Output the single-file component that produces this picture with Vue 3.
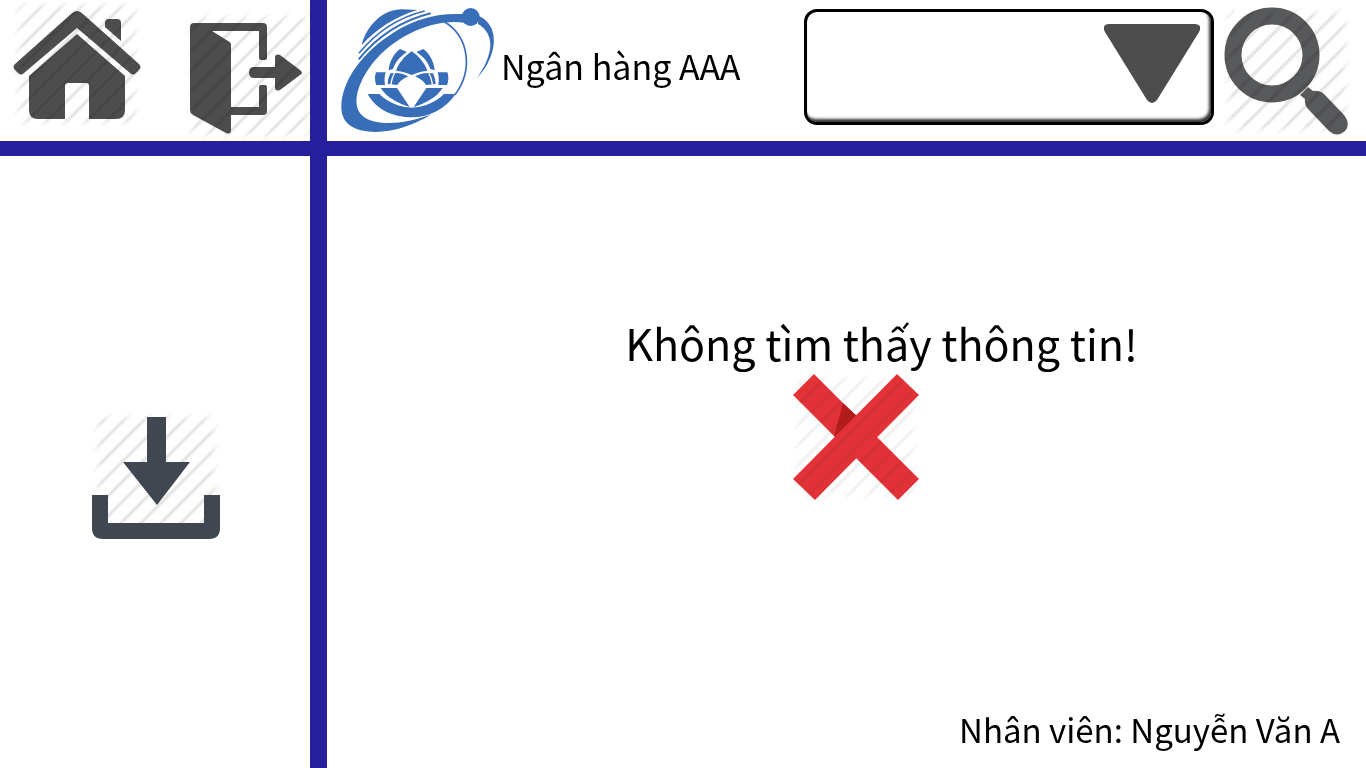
<script setup>
import { ref } from 'vue'

const bank = 'Ngân hàng AAA'
const employee = 'Nguyễn Văn A'
const query = ref('')
</script>

<template>
  <div class="screen">
    <nav class="tools" aria-label="Điều hướng">
      <button class="icon home" type="button" aria-label="Trang chủ">
        <svg viewBox="0 0 128 128" aria-hidden="true">
          <path d="M64 11Q61 11 58 14L2 64Q-1 67 2 70L5 73Q8 76 11 73L64 28L117 73Q120 76 123 73L126 70Q129 67 126 64L70 14Q67 11 64 11Z" />
          <path d="M92 27V23Q92 19 96 19H104Q108 19 108 23V41Z" />
          <path d="M64 34L16 76V110Q16 119 25 119H52V86Q52 83 55 83H73Q76 83 76 86V119H103Q112 119 112 110V76Z" />
        </svg>
      </button>
      <button class="icon exit" type="button" aria-label="Đăng xuất">
        <svg viewBox="0 0 128 128" aria-hidden="true">
          <path d="M4 15Q4 11 8 11H77Q81 11 81 15V46Q81 48 79 48H75Q73 48 73 46V19H26L42 29Q45 30 45 33V95H73V75Q73 73 75 73H79Q81 73 81 75V99Q81 103 77 103H45V118Q45 123 40 121L7 103Q4 101 4 98Z" />
          <path d="M68 55H89V46Q89 41 94 43L114 58Q118 61 114 63L94 78Q89 80 89 75V66H68Q63 66 63 60.500Q63 55 68 55Z" />
        </svg>
      </button>
    </nav>

    <header class="header">
      <div class="brand">
        <svg class="logo" viewBox="30 12 468 396" aria-hidden="true">
          <g fill="#386db8">
            <path d="M95 135C110 75 160 27 218 28L262 30C200 48 140 86 95 135Z" />
            <path d="M34 322C34 240 100 155 190 98C260 54 330 38 402 43V68C310 54 190 110 128 190C82 250 66 310 92 342C120 376 210 380 305 343C235 385 165 402 110 394C60 388 34 362 34 322Z" />
            <circle cx="422" cy="51" r="27" />
            <path d="M446 48C510 74 505 167 441 234C482 175 504 108 444 72Z" />
          </g>
          <g fill="none" stroke="#386db8" stroke-width="5">
            <path d="M87 160C140 95 205 52 284 33" />
            <path d="M86 178C140 112 210 63 302 40" stroke-width="6" />
            <path d="M343 65C418 110 430 210 375 284" />
          </g>
          <g transform="translate(105 132)" fill="#386db8">
            <path d="M8 150H43C70 178 110 190 140 191C170 190 210 178 237 150H272C240 197 190 220 140 220C90 220 35 200 8 150Z" />
            <path d="M140 22C162 37 179 57 187 80C167 82 152 88 140 93C128 88 113 82 93 80C101 57 118 37 140 22Z" />
            <g id="petals">
              <path d="M105 15L126 24C105 38 91 54 84 75L71 79C73 53 85 31 105 15Z" />
              <path d="M33 85H62C58 97 58 110 60 123H34Q26 103 33 85Z" />
              <path d="M76 88Q105 83 130 97C113 105 103 112 97 123L68 120Q68 105 76 88Z" />
              <path d="M47 132H96L134 189C98 178 65 160 47 132Z" />
              <path d="M90 84C83 96 79 108 77 124" fill="none" stroke="#fff" stroke-width="4" />
            </g>
            <use href="#petals" transform="translate(280 0) scale(-1 1)" />
          </g>
        </svg>
        <h1 class="bank">{{ bank }}</h1>
      </div>

      <form class="search" @submit.prevent>
        <div class="picker">
          <select v-model="query" aria-label="Tìm kiếm">
            <option value=""></option>
          </select>
          <svg viewBox="0 0 96 79" aria-hidden="true">
            <path d="M5 0H91Q99 1 95 8L53 76Q48 82 43 76L1 8Q-3 1 5 0Z" />
          </svg>
        </div>
        <button class="icon find" type="submit" aria-label="Tìm">
          <svg viewBox="0 0 128 128" aria-hidden="true">
            <circle cx="49" cy="48" r="39" fill="none" stroke="#58595b" stroke-width="17" />
            <path d="M77 88L85 80L90 84Q97 83 102 88L121 108Q128 117 122 124Q114 131 106 124L86 103Q81 98 82 92Z" />
          </svg>
        </button>
      </form>
    </header>

    <aside class="side">
      <button class="icon save" type="button" aria-label="Tải xuống">
        <svg viewBox="0 0 128 128" aria-hidden="true">
          <path d="M55 5H74V50H98L65 93L31 50H55Z" />
          <path d="M0 83H16V111H112V83H128V116Q128 127 117 127H11Q0 127 0 116Z" />
        </svg>
      </button>
    </aside>

    <main class="content">
      <div class="message" role="status">
        <p>Không tìm thấy thông tin!</p>
        <div class="icon cross">
          <svg viewBox="0 0 128 128" aria-hidden="true">
            <path d="M22 1L127 106L106 127L1 22Z" fill="#e23237" />
            <path d="M51 30L65 43L42 64Z" fill="#b71c1c" />
            <path d="M105 1L127 22L23 127L1 106Z" fill="#e23237" />
          </svg>
        </div>
      </div>
      <p class="employee">Nhân viên: {{ employee }}</p>
    </main>
  </div>
</template>

<style>
body {
  margin: 0;
  background: #fff;
}
</style>

<style scoped>
.screen {
  display: grid;
  grid-template-columns: 310px 1fr;
  grid-template-rows: 156px 1fr;
  min-height: 100vh;
  color: #000;
  font-family: "Noto Sans CJK SC", "Noto Sans", sans-serif;
}

.tools,
.header {
  border-bottom: 15px solid #251f9c;
}

.header,
.content {
  border-left: 17px solid #251f9c;
}

.tools,
.header,
.search,
.brand {
  display: flex;
  align-items: flex-start;
}

.tools {
  justify-content: space-between;
  padding-left: 13px;
}

.header {
  justify-content: space-between;
  padding: 0 15px 0 13px;
}

.icon {
  position: relative;
  flex: none;
  width: 128px;
  height: 128px;
  padding: 0;
  border: 0;
  background: none;
  fill: #4d4d4d;
  --tile: 20px;
  --shift: 0px;
  --line: #e6e6e6;
}

button.icon {
  cursor: pointer;
}

.icon svg {
  display: block;
  width: 128px;
  height: 128px;
}

/* diagonal hatching laid over each icon, fading out at the edges */
.icon::after {
  content: "";
  position: absolute;
  inset: 0;
  background: linear-gradient(
      135deg,
      var(--line) 4%,
      transparent 8% 42%,
      var(--line) 46% 54%,
      transparent 58% 92%,
      var(--line) 96%
    )
    var(--shift) 0 / var(--tile) var(--tile);
  mask-image: linear-gradient(90deg, transparent, #000 10px calc(100% - 10px), transparent),
    linear-gradient(transparent, #000 10px calc(100% - 10px), transparent);
  mask-composite: intersect;
  mix-blend-mode: multiply;
  pointer-events: none;
}

.home {
  --shift: 15px;
}

.exit {
  --shift: 4px;
  margin-top: 12px;
  margin-right: -4px;
}

.brand {
  gap: 5px;
}

.logo {
  display: block;
  width: 156px;
  height: 132px;
  margin-top: 4px;
}

.bank {
  margin: 42px 0 0;
  font-size: 34px;
  line-height: 48px;
  font-weight: 400;
}

.search {
  gap: 9px;
  padding-top: 7px;
}

.picker {
  position: relative;
  width: 410px;
  margin-top: 2px;
}

.picker select {
  display: block;
  width: 100%;
  height: 116px;
  padding: 0 120px 0 20px;
  border: 3px solid #000;
  border-radius: 13px;
  appearance: none;
  background: #fff;
  box-shadow: inset -2px -3px 3px #333;
  font: inherit;
  font-size: 34px;
}

.picker svg {
  position: absolute;
  top: 15px;
  right: 14px;
  width: 96px;
  height: 79px;
  fill: #4d4d4d;
  pointer-events: none;
}

.find {
  --tile: 21px;
  --shift: 14px;
  fill: #58595b;
}

.side {
  display: flex;
  align-items: center;
  justify-content: center;
  padding: 28px 0 0 2px;
}

.save {
  fill: #414750;
}

/* solid icon above its hatching */
.save svg {
  position: relative;
  z-index: 1;
}

.content {
  display: flex;
  flex-direction: column;
  justify-content: space-between;
}

.message {
  display: flex;
  flex-direction: column;
  align-items: center;
  padding-top: 156px;
}

.message p {
  margin: 0 0 1px 70px;
  font-size: 43px;
  line-height: 60px;
}

.cross {
  --shift: 18px;
  --line: #f1f1f1;
  margin-left: 18px;
}

.employee {
  margin: 0 26px 15px;
  text-align: right;
  font-size: 33px;
  line-height: 48px;
}
</style>
